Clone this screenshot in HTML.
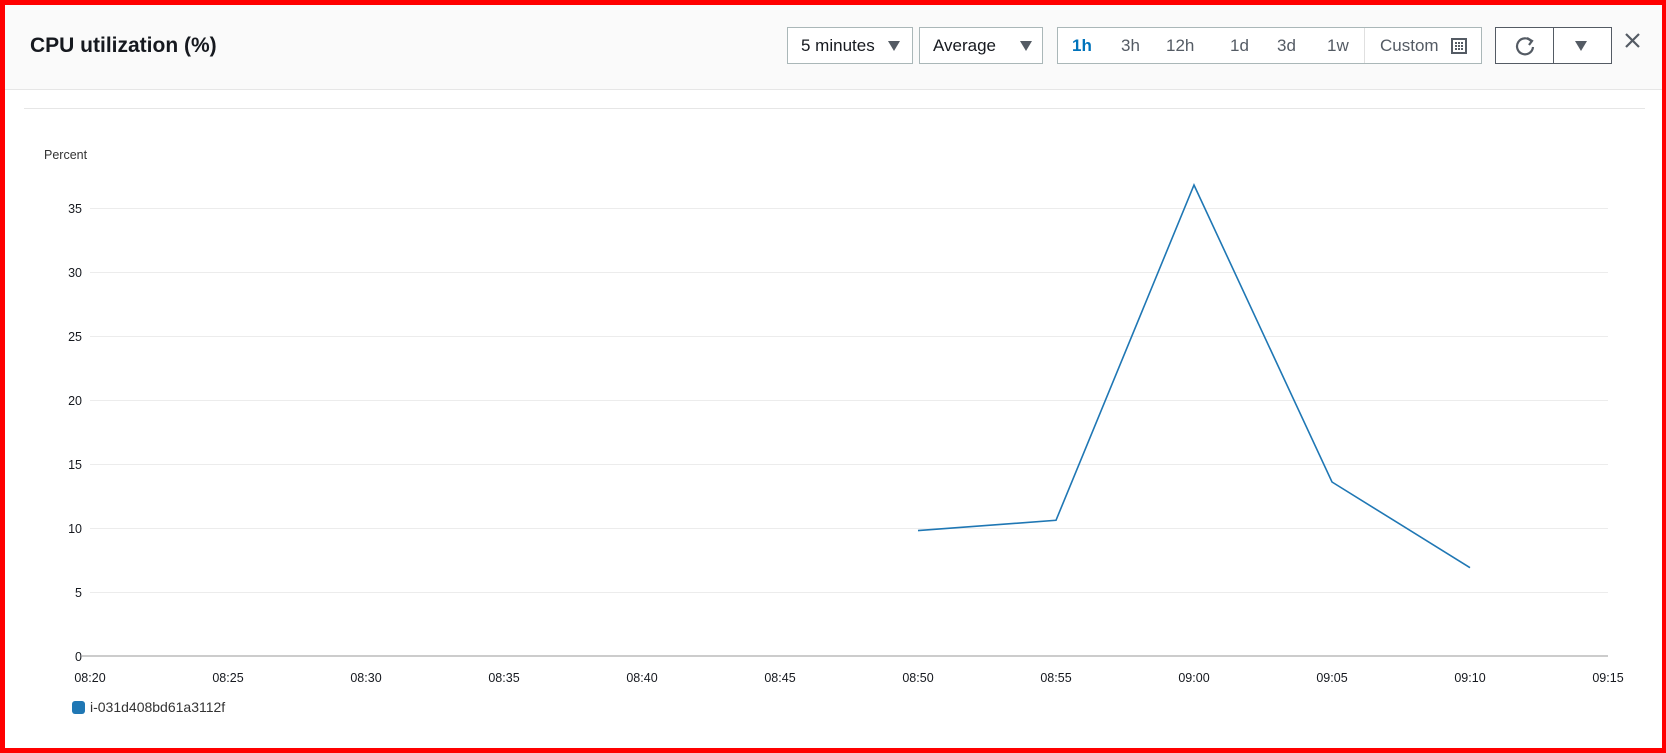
<!DOCTYPE html><html><head><style>
body{margin:0;width:1666px;height:753px;overflow:hidden;font-family:"Liberation Sans",sans-serif;background:#fff}
.frame{position:absolute;left:0;top:0;width:1666px;height:753px;box-sizing:border-box;border:5px solid #f00;border-right-width:4px}
.hdr{position:absolute;left:5px;top:5px;width:1657px;height:84px;background:#fafafa;border-bottom:1px solid #e6e6e6}
.t{position:absolute;left:25px;top:29px;font-size:21px;font-weight:bold;color:#16191f}
.box{position:absolute;top:27px;height:37px;border:1px solid #aab7b8;background:#fff;box-sizing:border-box;font-size:17px;color:#16191f;line-height:35px}
.seg span{position:absolute;top:0;color:#545b64}
.tri{display:inline-block;width:0;height:0;border-left:6px solid transparent;border-right:6px solid transparent;border-top:10px solid #545b64}
</style></head><body>
<div class="hdr">
<div class="t">CPU utilization (%)</div>
</div>
<div class="box" style="left:787px;width:126px"><span style="position:absolute;left:13px">5 minutes</span><span class="tri" style="position:absolute;left:100px;top:13px"></span></div>
<div class="box" style="left:919px;width:124px"><span style="position:absolute;left:13px">Average</span><span class="tri" style="position:absolute;left:100px;top:13px"></span></div>
<div class="box seg" style="left:1057px;width:425px">
<span style="left:14px;color:#0073bb;font-weight:bold">1h</span><span style="left:63px">3h</span><span style="left:108px">12h</span><span style="left:172px">1d</span><span style="left:219px">3d</span><span style="left:269px">1w</span>
<div style="position:absolute;left:306px;top:0;width:118px;height:35px;border-left:1px solid #e0e0e0"></div>
<span style="left:322px">Custom</span>
<svg style="position:absolute;left:393px;top:10px" width="16" height="16" viewBox="0 0 16 16"><rect x="1" y="1" width="14" height="14" fill="none" stroke="#545b64" stroke-width="2"/><g fill="#545b64"><rect x="4" y="4" width="2" height="2"/><rect x="7" y="4" width="2" height="2"/><rect x="10" y="4" width="2" height="2"/><rect x="4" y="7" width="2" height="2"/><rect x="7" y="7" width="2" height="2"/><rect x="10" y="7" width="2" height="2"/><rect x="4" y="10" width="2" height="2"/><rect x="7" y="10" width="2" height="2"/><rect x="10" y="10" width="2" height="2"/></g></svg>
</div>
<div class="box" style="left:1495px;width:117px;border-color:#545b64">
<div style="position:absolute;left:57px;top:0;width:1px;height:35px;background:#545b64"></div>
<svg style="position:absolute;left:18px;top:7px" width="22" height="22" viewBox="0 0 22 22"><path d="M17 6A8 8 0 1 0 19 12" fill="none" stroke="#545b64" stroke-width="2.2"/><path d="M13 3L18 6L15 10" fill="none" stroke="#545b64" stroke-width="2.2"/></svg>
<span class="tri" style="position:absolute;left:79px;top:13px"></span>
</div>
<svg style="position:absolute;left:1624px;top:32px" width="17" height="17" viewBox="0 0 17 17"><path d="M2 2L15 15M15 2L2 15" stroke="#545b64" stroke-width="2.2"/></svg>
<div style="position:absolute;left:24px;top:108px;width:1621px;height:1px;background:#e6e6e6"></div>
<svg style="position:absolute;left:0;top:0" width="1666" height="753" font-family="Liberation Sans, sans-serif" font-size="12.5" fill="#16191f">
<text x="44" y="159" fill="#333">Percent</text>
<g stroke="#ececec" stroke-width="1">
<line x1="90" x2="1608" y1="208.5" y2="208.5"/><line x1="90" x2="1608" y1="272.5" y2="272.5"/><line x1="90" x2="1608" y1="336.5" y2="336.5"/><line x1="90" x2="1608" y1="400.5" y2="400.5"/><line x1="90" x2="1608" y1="464.5" y2="464.5"/><line x1="90" x2="1608" y1="528.5" y2="528.5"/><line x1="90" x2="1608" y1="592.5" y2="592.5"/>
</g>
<line x1="82" x2="1608" y1="656" y2="656" stroke="#ccc" stroke-width="2"/>
<g text-anchor="end"><text x="82" y="213">35</text><text x="82" y="277">30</text><text x="82" y="341">25</text><text x="82" y="405">20</text><text x="82" y="469">15</text><text x="82" y="533">10</text><text x="82" y="597">5</text><text x="82" y="661">0</text></g>
<g text-anchor="middle"><text x="90" y="682">08:20</text><text x="228" y="682">08:25</text><text x="366" y="682">08:30</text><text x="504" y="682">08:35</text><text x="642" y="682">08:40</text><text x="780" y="682">08:45</text><text x="918" y="682">08:50</text><text x="1056" y="682">08:55</text><text x="1194" y="682">09:00</text><text x="1332" y="682">09:05</text><text x="1470" y="682">09:10</text><text x="1608" y="682">09:15</text></g>
<polyline points="918,530.6 1056,520.3 1194,185 1332,482 1470,567.7" fill="none" stroke="#1f77b4" stroke-width="1.6"/>
<rect x="72" y="701" width="13" height="13" rx="3" fill="#1f77b4"/>
<text x="90" y="712" font-size="14" fill="#333">i-031d408bd61a3112f</text>
</svg>
<div class="frame"></div>
</body></html>
